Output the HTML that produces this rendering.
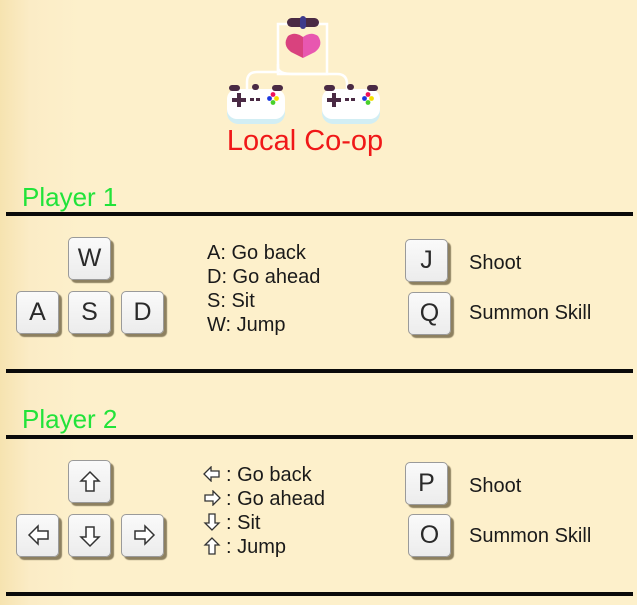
<!DOCTYPE html>
<html><head><meta charset="utf-8"><style>
*{margin:0;padding:0;box-sizing:border-box}
body{width:637px;height:605px;overflow:hidden;position:relative;font-family:"Liberation Sans",sans-serif;background:linear-gradient(90deg,#f6e3b0 0px,#fbecc6 30px,#fdf0cb 80px,#fdf0cb 100%)}
.a{position:absolute}
.k{position:absolute;width:43px;height:43px;background:linear-gradient(#fafafa,#ececec);border:1.5px solid #9a9a9a;border-radius:5px;box-shadow:3px 3px 1px #8d8060;font-size:25px;color:#2a2a2a;text-align:center;line-height:41px}
.line{position:absolute;left:6px;width:627px;height:4px;background:#0a0a0a}
.t{position:absolute;font-size:20px;color:#1a1a1a;line-height:24px;white-space:nowrap}
.p{position:absolute;left:22px;font-size:26px;color:#22e33a}
.k svg{position:absolute;left:10px;top:9px}
.row{height:24px;position:relative;padding-left:23px}
.row svg{position:absolute;left:0;top:3px}
</style></head><body>
<svg class="a" style="left:225px;top:12px" width="165" height="115" viewBox="0 0 165 115">
<path d="M53 12 H102 V62 H53 Z" fill="none" stroke="#fff" stroke-width="2.5"/>
<path d="M53 52 V60 H32 Q22 60 22 70 V78 M53 55 Q53 62 68 62 H112 Q122 62 122 72 V78" fill="none" stroke="#fff" stroke-width="2.5"/>
<rect x="62" y="6" width="32" height="9" rx="4.5" fill="#4a2a44"/><rect x="75" y="4" width="6" height="13" rx="3" fill="#3e3a8c"/>
<path d="M78 25 Q70 19 63 24 Q57 33 66 40 L78 46 Z" fill="#d9427e"/><path d="M78 25 Q86 19 93 24 Q99 33 90 40 L78 46 Z" fill="#e857b0"/>
<g id="pad"><rect x="2" y="80" width="58" height="32" rx="11" fill="#d2eef4"/><rect x="2" y="77" width="58" height="30" rx="10" fill="#fff"/>
<rect x="4" y="73" width="11" height="6" rx="3" fill="#4a2a44"/><rect x="47" y="73" width="11" height="6" rx="3" fill="#4a2a44"/><rect x="27" y="72" width="7" height="6" rx="3" fill="#4a2a44"/>
<rect x="7" y="86" width="14" height="4" fill="#4a2a44"/><rect x="12" y="81" width="4" height="14" fill="#4a2a44"/>
<rect x="25" y="86" width="4" height="3" fill="#4a2a44"/><rect x="31" y="86" width="4" height="3" fill="#4a2a44"/>
<circle cx="48" cy="82.5" r="2.4" fill="#f0145a"/><circle cx="44.5" cy="86.5" r="2.4" fill="#1a36e0"/><circle cx="51.5" cy="86.5" r="2.4" fill="#f5e000"/><circle cx="48" cy="90.5" r="2.4" fill="#48d02a"/></g>
<use href="#pad" x="95"/>
</svg>
<div class="a" style="left:0;width:610px;top:125px;text-align:center;font-size:29px;color:#f01818">Local Co-op</div>
<div class="p" style="top:182px">Player 1</div>
<div class="line" style="top:212px"></div>
<div class="k" style="left:68px;top:237px">W</div>
<div class="k" style="left:16px;top:291px">A</div>
<div class="k" style="left:68px;top:291px">S</div>
<div class="k" style="left:121px;top:291px">D</div>
<div class="t" style="left:207px;top:241px">A: Go back<br>D: Go ahead<br>S: Sit<br>W: Jump</div>
<div class="k" style="left:405px;top:239px">J</div>
<div class="k" style="left:408px;top:292px">Q</div>
<div class="t" style="left:469px;top:251px">Shoot</div>
<div class="t" style="left:469px;top:301px">Summon Skill</div>
<div class="line" style="top:369px"></div>
<div class="p" style="top:404px">Player 2</div>
<div class="line" style="top:435px"></div>
<div class="k" style="left:68px;top:460px"><svg width="22" height="24" viewBox="0 0 22 24"><path d="M11 2 L20 11 H15 V21 H7 V11 H2 Z" fill="#fff" stroke="#333" stroke-width="1.5"/></svg></div>
<div class="k" style="left:16px;top:514px"><svg width="24" height="22" viewBox="0 0 24 22"><path d="M2 11 L11 2 V7 H21 V15 H11 V20 Z" fill="#fff" stroke="#333" stroke-width="1.5"/></svg></div>
<div class="k" style="left:68px;top:514px"><svg width="22" height="24" viewBox="0 0 22 24"><path d="M11 22 L20 13 H15 V3 H7 V13 H2 Z" fill="#fff" stroke="#333" stroke-width="1.5"/></svg></div>
<div class="k" style="left:121px;top:514px"><svg width="24" height="22" viewBox="0 0 24 22"><path d="M22 11 L13 2 V7 H3 V15 H13 V20 Z" fill="#fff" stroke="#333" stroke-width="1.5"/></svg></div>
<div class="t" style="left:203px;top:463px">
<div class="row"><svg width="18" height="16" viewBox="0 0 18 16"><path d="M1 8 L8 1 V5 H16 V11 H8 V15 Z" fill="#fff" stroke="#333" stroke-width="1.3"/></svg>: Go back</div>
<div class="row"><svg width="18" height="16" viewBox="0 0 18 16"><path d="M17 8 L10 1 V5 H2 V11 H10 V15 Z" fill="#fff" stroke="#333" stroke-width="1.3"/></svg>: Go ahead</div>
<div class="row"><svg width="18" height="18" viewBox="0 0 18 18" style="top:2px"><path d="M9 17 L2 10 H6 V1 H12 V10 H16 Z" fill="#fff" stroke="#333" stroke-width="1.3"/></svg>: Sit</div>
<div class="row"><svg width="18" height="18" viewBox="0 0 18 18" style="top:2px"><path d="M9 1 L2 8 H6 V17 H12 V8 H16 Z" fill="#fff" stroke="#333" stroke-width="1.3"/></svg>: Jump</div>
</div>
<div class="k" style="left:405px;top:462px">P</div>
<div class="k" style="left:408px;top:514px">O</div>
<div class="t" style="left:469px;top:474px">Shoot</div>
<div class="t" style="left:469px;top:524px">Summon Skill</div>
<div class="line" style="top:592px"></div>
</body></html>
